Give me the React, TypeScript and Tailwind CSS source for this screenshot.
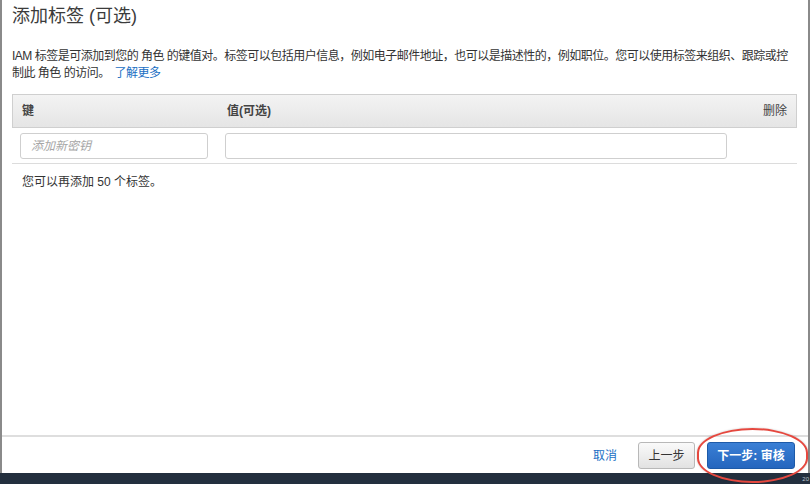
export default function App() {
  const font = { fontFamily: '"Liberation Sans", "Noto Sans CJK SC", sans-serif' };

  return (
    <div
      className="relative w-[810px] h-[484px] flex flex-col bg-white text-[#333] overflow-hidden"
      style={font}
    >
      {/* Dialog body */}
      <div className="flex-1 flex flex-col border-l-2 border-r-2 border-[#8a8a8a] min-h-0">
        <div className="flex-1 px-[10px]">
          <h2 className="text-[18px] leading-[22px] pt-[5px] text-[#3b3b3b]">添加标签 (可选)</h2>

          <p className="mt-[21px] text-[12px] leading-[17px] text-[#333] tracking-[-0.5px]">
            <span className="whitespace-nowrap">
              IAM 标签是可添加到您的 角色 的键值对。标签可以包括用户信息，例如电子邮件地址，也可以是描述性的，例如职位。您可以使用标签来组织、跟踪或控
            </span>
            <br />
            制此 角色 的访问。 <a className="text-[#1a6fc4] ml-[2px]">了解更多</a>
          </p>

          {/* Tag table */}
          <div className="mt-[12px] mr-[1px]">
            <div className="flex items-center h-[34px] border border-[#cfcfcf] bg-gradient-to-b from-[#f3f3f3] to-[#e5e5e5] text-[12px] font-bold text-[#444]">
              <div className="w-[214px] pl-[9px]">键</div>
              <div className="flex-1">值(可选)</div>
              <div className="pr-[9px] font-normal text-[#444]">删除</div>
            </div>
            <div className="flex items-center gap-[17px] h-[36px] pl-[8px] border-b border-[#dcdcdc]">
              <input
                placeholder="添加新密钥"
                className="w-[188px] h-[26px] border border-[#cfcfcf] rounded-[3px] px-[10px] text-[12px] italic placeholder:text-[#a6a6a6] outline-none"
              />
              <input className="w-[502px] h-[26px] border border-[#cfcfcf] rounded-[3px] px-[10px] text-[12px] outline-none" />
            </div>
            <div className="pl-[10px] pt-[10px] text-[12px] leading-[17px] text-[#333]">您可以再添加 50 个标签。</div>
          </div>
        </div>

        {/* Footer */}
        <div className="h-[38px] border-t-2 border-[#dedede] flex items-center justify-end pr-[13px] pt-[1px]">
          <a className="text-[12px] text-[#1a6fc4] mr-[21px]">取消</a>
          <button className="w-[57px] h-[27px] rounded-[3px] border border-[#b8b8b8] bg-gradient-to-b from-[#fafafa] to-[#e2e2e2] text-[12px] text-[#333] mr-[12px]">
            上一步
          </button>
          <button className="w-[88px] h-[27px] rounded-[3px] border border-[#1d5aa8] bg-gradient-to-b from-[#3a7fd5] to-[#2566be] text-[12px] font-bold text-white">
            下一步: 审核
          </button>
        </div>
      </div>

      {/* Bottom dark strip */}
      <div className="h-[11px] bg-[#232f3e] flex justify-end items-center pr-[1px]">
        <span className="text-[6px] leading-[6px] text-[#b9c2cc]">20</span>
      </div>

      {/* Annotation highlight */}
      <div className="absolute left-[697px] top-[428px] w-[111px] h-[55px] rounded-[50%/45%] border-2 border-[#e5483f] shadow-[0_0_2px_rgba(0,0,0,0.25)] pointer-events-none" />
    </div>
  );
}
